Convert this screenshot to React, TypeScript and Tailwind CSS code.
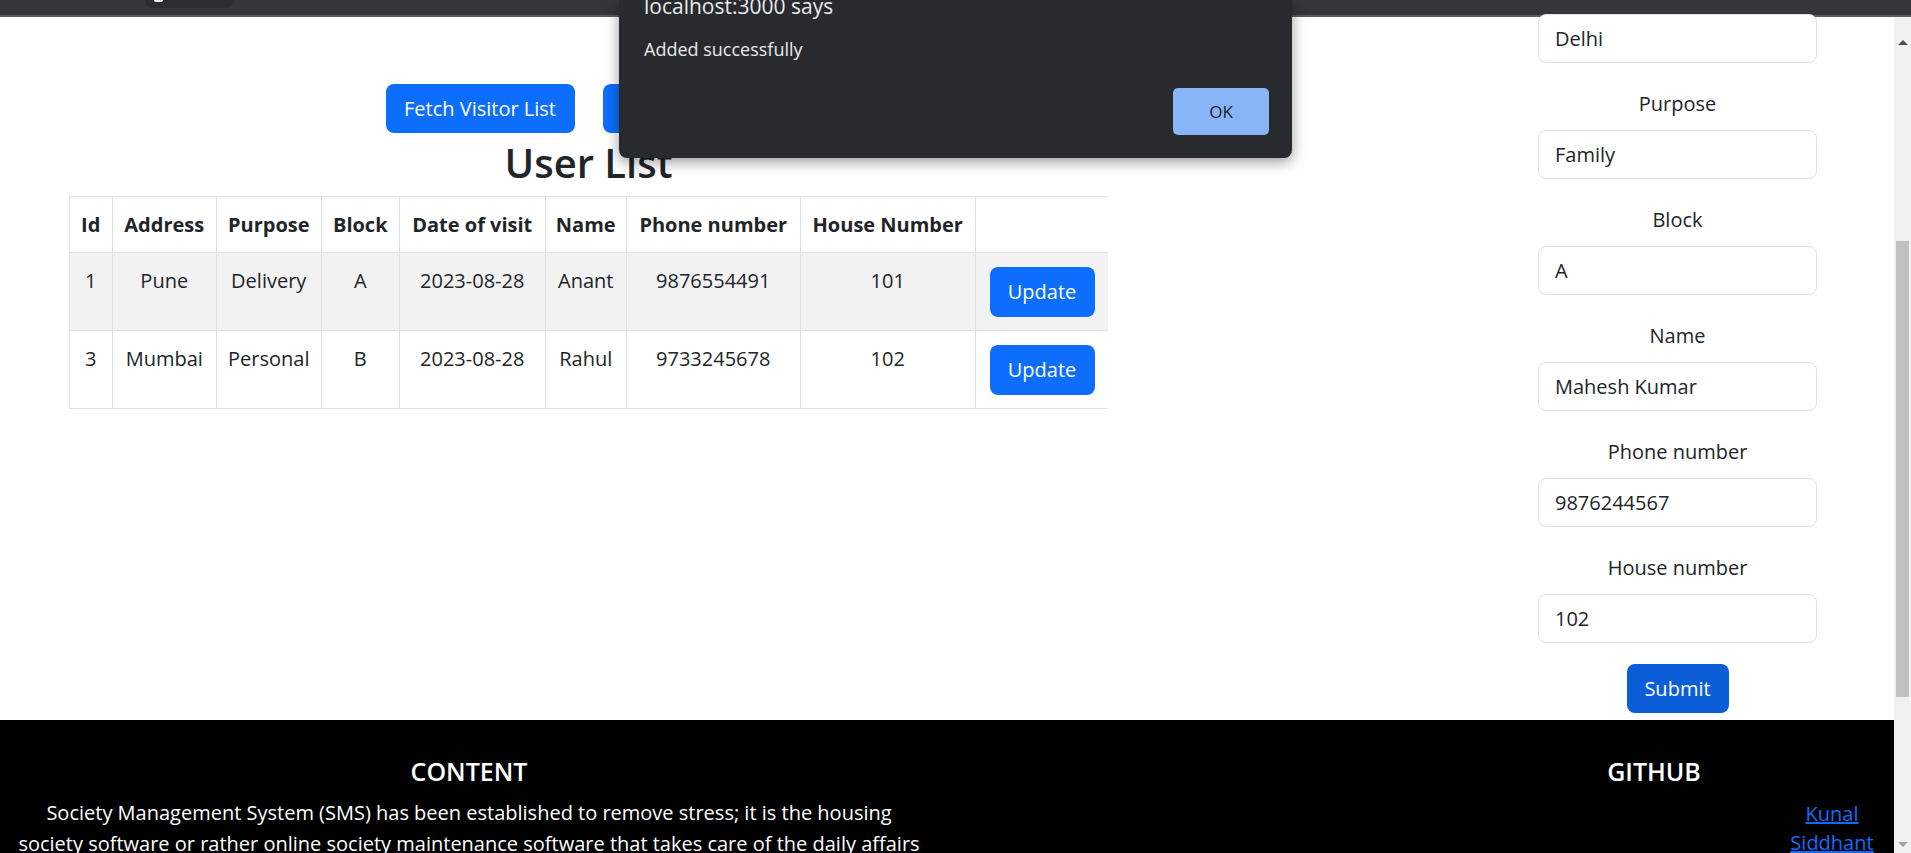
import React from 'react';

const columns = [
  { label: 'Id', width: 'w-[43px]' },
  { label: 'Address', width: 'w-[104px]' },
  { label: 'Purpose', width: 'w-[105px]' },
  { label: 'Block', width: 'w-[78px]' },
  { label: 'Date of visit', width: 'w-[146px]' },
  { label: 'Name', width: 'w-[81px]' },
  { label: 'Phone number', width: 'w-[174px]' },
  { label: 'House Number', width: 'w-[175px]' },
];

const visitors = [
  { id: 1, address: 'Pune', purpose: 'Delivery', block: 'A', date: '2023-08-28', name: 'Anant', phone: '9876554491', house: '101' },
  { id: 3, address: 'Mumbai', purpose: 'Personal', block: 'B', date: '2023-08-28', name: 'Rahul', phone: '9733245678', house: '102' },
];

const fields = [
  { label: 'Purpose', value: 'Family' },
  { label: 'Block', value: 'A' },
  { label: 'Name', value: 'Mahesh Kumar' },
  { label: 'Phone number', value: '9876244567' },
  { label: 'House number', value: '102' },
];

function TextInput({ value }: { value: string }) {
  return (
    <input
      readOnly
      value={value}
      className="h-[49px] w-[279px] rounded-[8px] border border-[#dee2e6] bg-white px-[16px] text-[20px] text-[#212529] outline-none"
    />
  );
}

function VisitorTable() {
  return (
    <table className="w-[1039px] table-fixed border-collapse text-[20px] leading-[30px] text-[#212529]">
      <thead>
        <tr>
          {columns.map(col => (
            <th key={col.label} className={`${col.width} h-[56px] border border-[#dee2e6] px-[4px] text-center align-middle font-bold`}>
              {col.label}
            </th>
          ))}
          <th className="w-[133px] h-[56px] border-y border-[#dee2e6]"></th>
        </tr>
      </thead>
      <tbody>
        {visitors.map((v, i) => (
          <tr key={v.id} className={i % 2 === 0 ? 'bg-[#f2f2f2]' : 'bg-white'}>
            {[v.id, v.address, v.purpose, v.block, v.date, v.name, v.phone, v.house].map((cell, j) => (
              <td key={j} className="h-[78px] border border-[#dee2e6] px-[4px] pt-[13px] text-center align-top">
                {cell}
              </td>
            ))}
            <td className="h-[78px] border-y border-[#dee2e6] text-center align-middle">
              <button className="h-[50px] w-[105px] rounded-[8px] bg-[#0d6efd] text-[20px] text-white">Update</button>
            </td>
          </tr>
        ))}
      </tbody>
    </table>
  );
}

function AlertDialog() {
  return (
    <div className="absolute left-[619px] top-0 z-20 h-[158px] w-[673px] rounded-b-[8px] bg-[#292a2d] shadow-[0_4px_14px_rgba(0,0,0,0.4)]">
      <div className="mt-[-6px] pl-[25px] text-[21px] leading-[24px] text-[#e8eaed]">localhost:3000 says</div>
      <div className="mt-[19px] pl-[25px] text-[18px] leading-[24px] text-[#e8eaed]">Added successfully</div>
      <div className="mt-[27px] flex justify-end pr-[23px]">
        <button className="h-[47px] w-[96px] rounded-[5px] bg-[#8ab4f8] text-[17px] text-[#202124]">OK</button>
      </div>
    </div>
  );
}

function Scrollbar() {
  return (
    <div className="flex w-[17px] flex-none flex-col bg-[#f1f1f1]">
      <div className="flex h-[28px] items-end justify-center">
        <div className="h-0 w-0 border-x-[5px] border-b-[5px] border-x-transparent border-b-[#505050]" />
      </div>
      <div className="h-[196px]" />
      <div className="mx-[2px] h-[456px] bg-[#c1c1c1]" />
      <div className="flex-1" />
      <div className="flex h-[17px] items-center justify-center">
        <div className="h-0 w-0 border-x-[5px] border-t-[5px] border-x-transparent border-t-[#a3a3a3]" />
      </div>
    </div>
  );
}

export default function App() {
  return (
    <div className="relative flex h-[853px] w-[1911px] flex-col overflow-hidden bg-white font-['Open_Sans',sans-serif] text-[#212529]">
      <div className="h-[17px] flex-none border-b-2 border-[#5a5b5f] bg-[#35363a]">
        <div className="relative ml-[145px] h-[8px] w-[88px] rounded-b-full bg-[#2c2d30]">
          <div className="absolute left-[9px] top-0 h-[2px] w-[9px] rounded-b-full bg-white" />
        </div>
      </div>

      <AlertDialog />

      <div className="flex min-h-0 flex-1">
        <div className="flex min-w-0 flex-1 flex-col">
          <div className="flex h-[703px] flex-none">
            <div className="flex w-[1177px] flex-col items-center pt-[67px]">
              <div className="flex gap-[28px]">
                <button className="h-[49px] w-[189px] rounded-[8px] bg-[#0d6efd] text-[20px] text-white">Fetch Visitor List</button>
                <button className="h-[49px] w-[189px] rounded-[8px] bg-[#0d6efd] text-[20px] text-white">Add Visitor</button>
              </div>
              <h1 className="mb-[8px] mt-[5px] text-[40px] font-semibold leading-[50px]">User List</h1>
              <VisitorTable />
            </div>

            <div className="ml-[361px] mt-[-3px] flex w-[279px] flex-col">
              <TextInput value="Delhi" />
              {fields.map(f => (
                <div key={f.label} className="mt-[26px] flex flex-col">
                  <label className="mb-[11px] text-center text-[20px] leading-[30px]">{f.label}</label>
                  <TextInput value={f.value} />
                </div>
              ))}
              <button className="mt-[21px] h-[49px] w-[102px] self-center rounded-[8px] bg-[#0b5ed7] text-[20px] text-white">Submit</button>
            </div>
          </div>

          <footer className="flex flex-1 bg-black text-white">
            <div className="w-[938px] px-[14px] pt-[36px] text-center">
              <h5 className="mb-[11px] text-[25px] font-semibold leading-[30px]">CONTENT</h5>
              <p className="text-[20px] leading-[31px]">
                Society Management System (SMS) has been established to remove stress; it is the housing society software or rather online society maintenance software that takes care of the daily affairs of a housing society, from accounts to visitors.
              </p>
            </div>
            <div className="ml-auto flex w-[480px] flex-col pt-[36px]">
              <h5 className="text-center text-[25px] font-semibold leading-[30px]">GITHUB</h5>
              <ul className="mt-[13px] w-[124px] self-end text-center text-[20px] leading-[29px]">
                <li><a href="#" className="text-[#0d6efd] underline">Kunal</a></li>
                <li><a href="#" className="text-[#0d6efd] underline">Siddhant</a></li>
              </ul>
            </div>
          </footer>
        </div>
        <Scrollbar />
      </div>
    </div>
  );
}
